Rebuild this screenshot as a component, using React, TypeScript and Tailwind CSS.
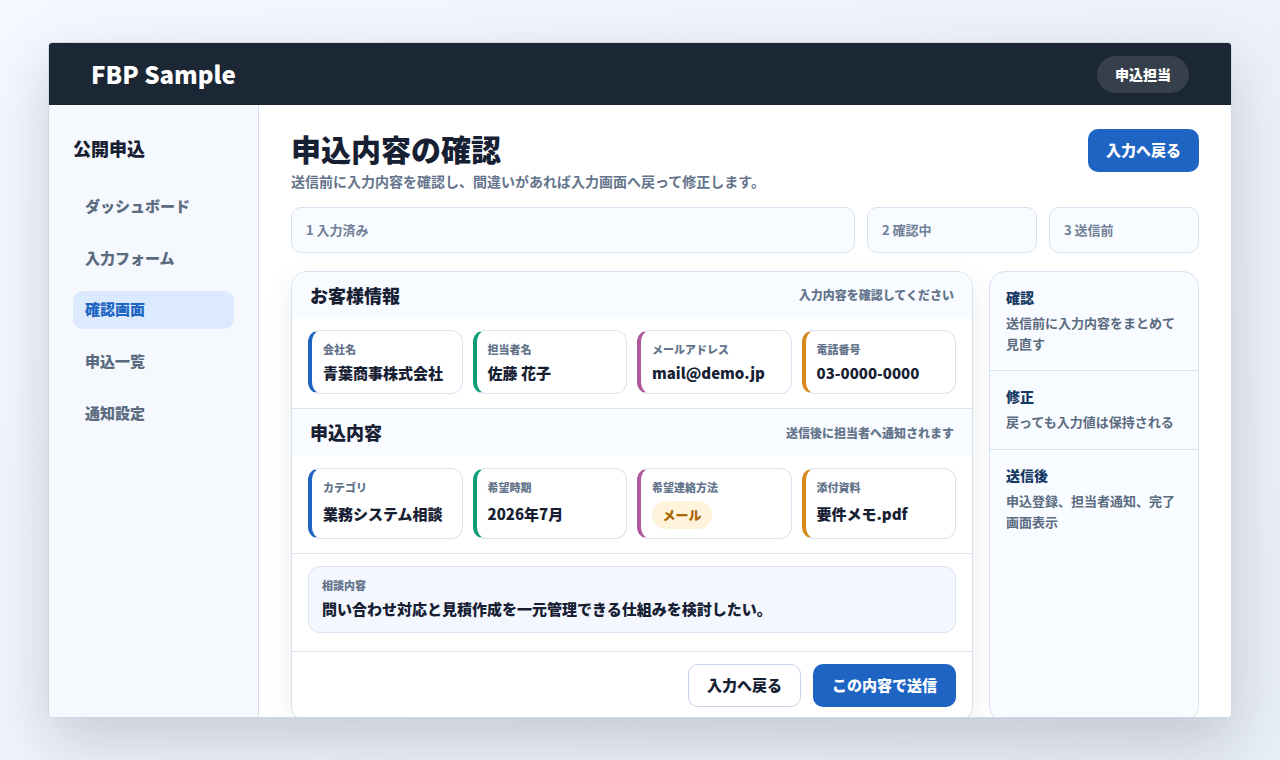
const FONT = "font-['Noto_Sans_CJK_JP','Noto_Sans',sans-serif]";

const navItems = ["ダッシュボード", "入力フォーム", "確認画面", "申込一覧", "通知設定"];

function Field({ label, value, border, tall }: { label: string; value: React.ReactNode; border: string; tall?: boolean }) {
  return (
    <div className={`border border-[#d9e2ef] border-l-4 ${border} rounded-xl bg-white pl-[11px] pr-3 pt-[10px] ${tall ? "h-[71px]" : "h-[64px]"}`}>
      <div className="text-[11px] leading-4 font-extrabold text-[#64748b]">{label}</div>
      <div className={`${tall ? "mt-[6px]" : "mt-[3px]"} text-[15px] leading-[26px] font-extrabold text-[#172033]`}>{value}</div>
    </div>
  );
}

function SectionHead({ title, note, first }: { title: string; note: string; first?: boolean }) {
  return (
    <div className={`${first ? "h-[46px]" : "h-[47px]"} bg-[#f8fbff] flex items-center justify-between pl-[18px] pr-[18px]`}>
      <div className="text-[18px] font-extrabold text-[#172033]">{title}</div>
      <div className="text-xs font-extrabold text-[#64748b]">{note}</div>
    </div>
  );
}

function Note({ title, body, size }: { title: string; body: string; size?: string }) {
  return (
    <div className={`px-4 pt-[15px] ${size ?? ""} ${size ? "border-b border-[#d9e2ef]" : ""}`}>
      <div className="text-sm leading-[20px] font-extrabold text-[#163a63]">{title}</div>
      <div className="mt-[5px] text-[13px] leading-[21px] font-bold text-[#5b6b80]">{body}</div>
    </div>
  );
}

export default function App() {
  return (
    <div className={`${FONT} h-[760px] overflow-hidden bg-[linear-gradient(135deg,#f4f8ff,#e8eef6)] pt-[42px] px-[48px] pb-[42px]`}>
      <div className="h-[676px] w-[1184px] flex flex-col overflow-hidden rounded-[4px] border border-[#cfd9e6] bg-white shadow-[0_24px_60px_rgba(15,23,42,0.18)]">
        <header className="h-[62px] shrink-0 bg-[#1c2735] flex items-center justify-between pl-[42px] pr-[42px]">
          <div className="text-2xl font-extrabold text-white">FBP Sample</div>
          <div className="h-[37px] px-[18px] rounded-full bg-[#363f4c] flex items-center text-sm font-extrabold text-white">申込担当</div>
        </header>
        <div className="flex flex-1 min-h-0">
          <aside className="w-[210px] shrink-0 bg-[#f5f8fd] border-r border-[#d3ddea] pl-6 pr-6 pt-[29px]">
            <div className="text-lg leading-[28px] font-extrabold text-[#172033]">公開申込</div>
            <nav className="mt-[25px] flex flex-col gap-[13.75px]">
              {navItems.map((item) => (
                <div
                  key={item}
                  className={`h-[38px] px-3 rounded-[10px] flex items-center text-[15px] font-extrabold ${item === "確認画面" ? "bg-[#dbeafe] text-[#1e65c3]" : "text-[#5b6b80]"}`}
                >
                  {item}
                </div>
              ))}
            </nav>
          </aside>
          <main className="flex-1 min-w-0 pl-8 pr-8 pt-6">
            <div className="flex items-start justify-between">
              <div>
                <h1 className="text-[30px] leading-[38px] font-extrabold text-[#172033]">申込内容の確認</h1>
                <p className="mt-1 text-sm leading-5 font-bold text-[#64748b]">送信前に入力内容を確認し、間違いがあれば入力画面へ戻って修正します。</p>
              </div>
              <button className="h-[43px] w-[111px] rounded-[10px] bg-[#1e65c3] text-[15px] font-extrabold text-white">入力へ戻る</button>
            </div>
            <div className="mt-4 flex gap-3">
              {[["1 入力済み", "w-[564px]"], ["2 確認中", "w-[170px]"], ["3 送信前", "w-[150px]"]].map(([label, w]) => (
                <div key={label} className={`${w} h-[46px] rounded-[10px] border border-[#d9e2ef] bg-[#f8fbff] px-[14px] flex items-center text-[13px] font-bold text-[#718096]`}>
                  {label}
                </div>
              ))}
            </div>
            <div className="mt-[18px] flex gap-4">
              <section className="w-[682px] h-[451px] overflow-hidden rounded-2xl border border-[#d9e2ef] bg-white shadow-[0_8px_30px_rgba(15,23,42,0.07)]">
                <SectionHead first title="お客様情報" note="入力内容を確認してください" />
                <div className="grid grid-cols-4 gap-[10px] px-4 pt-3 pb-[14px] border-b border-[#d9e2ef]">
                  <Field label="会社名" value="青葉商事株式会社" border="border-l-[#1e65c3]" />
                  <Field label="担当者名" value="佐藤 花子" border="border-l-[#0f9d77]" />
                  <Field label="メールアドレス" value="mail@demo.jp" border="border-l-[#b0589c]" />
                  <Field label="電話番号" value="03-0000-0000" border="border-l-[#d68a1e]" />
                </div>
                <SectionHead title="申込内容" note="送信後に担当者へ通知されます" />
                <div className="grid grid-cols-4 gap-[10px] px-4 pt-3 pb-[14px] border-b border-[#d9e2ef]">
                  <Field tall label="カテゴリ" value="業務システム相談" border="border-l-[#1e65c3]" />
                  <Field tall label="希望時期" value="2026年7月" border="border-l-[#0f9d77]" />
                  <Field
                    tall
                    label="希望連絡方法"
                    value={<span className="inline-flex h-7 items-center rounded-full bg-[#fff3dc] px-[10.5px] text-[13px] text-[#a86500]">メール</span>}
                    border="border-l-[#b0589c]"
                  />
                  <Field tall label="添付資料" value="要件メモ.pdf" border="border-l-[#d68a1e]" />
                </div>
                <div className="px-4 pt-3 pb-[18px] border-b border-[#d9e2ef]">
                  <div className="h-[67px] rounded-xl border border-[#d9e2ef] bg-[#f4f8fe] px-[13px] pt-[10px]">
                    <div className="text-[11px] leading-4 font-extrabold text-[#64748b]">相談内容</div>
                    <div className="mt-1 text-[15px] leading-6 font-extrabold text-[#172033]">問い合わせ対応と見積作成を一元管理できる仕組みを検討したい。</div>
                  </div>
                </div>
                <div className="flex justify-end gap-3 px-4 pt-3">
                  <button className="h-[43px] w-[113px] rounded-[10px] border border-[#c7d6e8] bg-white text-[15px] font-extrabold text-[#172033]">入力へ戻る</button>
                  <button className="h-[43px] w-[143px] rounded-[10px] bg-[#1e65c3] text-[15px] font-extrabold text-white">この内容で送信</button>
                </div>
              </section>
              <aside className="w-[210px] h-[451px] overflow-hidden rounded-2xl border border-[#d9e2ef] bg-[#f8fbff]">
                <Note title="確認" body="送信前に入力内容をまとめて見直す" size="h-[99px]" />
                <Note title="修正" body="戻っても入力値は保持される" size="h-[79px]" />
                <Note title="送信後" body="申込登録、担当者通知、完了画面表示" />
              </aside>
            </div>
          </main>
        </div>
      </div>
    </div>
  );
}
